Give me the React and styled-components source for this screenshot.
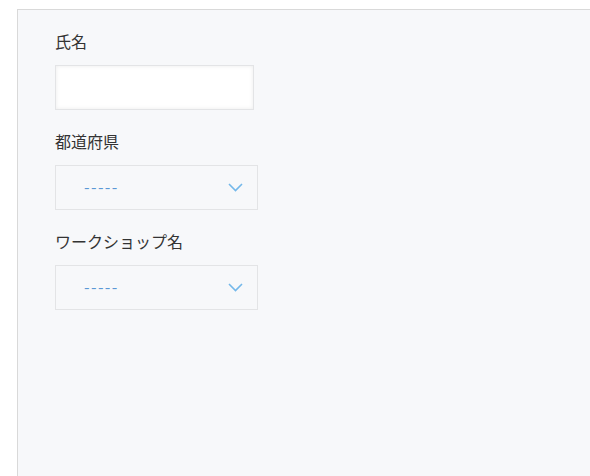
import styled, { createGlobalStyle } from 'styled-components';

const GlobalStyle = createGlobalStyle`
  html, body {
    margin: 0;
    padding: 0;
    background: #ffffff;
    overflow: hidden;
  }
  body {
    font-family: "Noto Sans CJK JP", "Noto Sans", sans-serif;
  }
`;

const Page = styled.div`
  padding: 9px 0 0 17px;
  height: 100vh;
  box-sizing: border-box;
  display: flex;
`;

const Panel = styled.form`
  flex: 1;
  background: #f7f8fa;
  border-top: 1px solid #d9d9d9;
  border-left: 1px solid #d9d9d9;
  padding: 19px 0 0 37px;
  display: flex;
  flex-direction: column;
  gap: 19px;
`;

const Field = styled.div`
  display: flex;
  flex-direction: column;
  align-items: flex-start;
  gap: 12px;
`;

const Label = styled.label`
  font-size: 16px;
  line-height: 24px;
  color: #333333;
`;

const TextInput = styled.input`
  box-sizing: border-box;
  width: 199px;
  height: 45px;
  border: 1px solid #e3e4e6;
  background: #ffffff;
  box-shadow: inset 0 0 4px rgba(0, 0, 0, 0.08);
  outline: none;
  padding: 0 12px;
  font: inherit;
`;

const SelectWrap = styled.div`
  position: relative;
  width: 203px;
  height: 45px;
`;

const Select = styled.select`
  appearance: none;
  box-sizing: border-box;
  width: 100%;
  height: 100%;
  margin: 0;
  border: 1px solid #e3e4e6;
  border-radius: 0;
  background: #f7f8fa;
  padding: 0 0 3px 28px;
  font-family: "Noto Sans CJK JP", "Noto Sans", sans-serif;
  font-size: 16px;
  letter-spacing: 1.4px;
  color: #5b98d6;
  outline: none;
`;

const Chevron = styled.svg`
  position: absolute;
  right: 15px;
  top: 18px;
  pointer-events: none;
`;

const SelectField = ({ label }) => (
  <Field>
    <Label>{label}</Label>
    <SelectWrap>
      <Select defaultValue="">
        <option value="">-----</option>
      </Select>
      <Chevron width="15" height="9" viewBox="0 0 15 9">
        <path d="M1 1 L7.5 7.5 L14 1" fill="none" stroke="#74b8ea" strokeWidth="1.6" />
      </Chevron>
    </SelectWrap>
  </Field>
);

export default function App() {
  return (
    <>
      <GlobalStyle />
      <Page>
        <Panel>
          <Field>
            <Label>氏名</Label>
            <TextInput type="text" />
          </Field>
          <SelectField label="都道府県" />
          <SelectField label="ワークショップ名" />
        </Panel>
      </Page>
    </>
  );
}
